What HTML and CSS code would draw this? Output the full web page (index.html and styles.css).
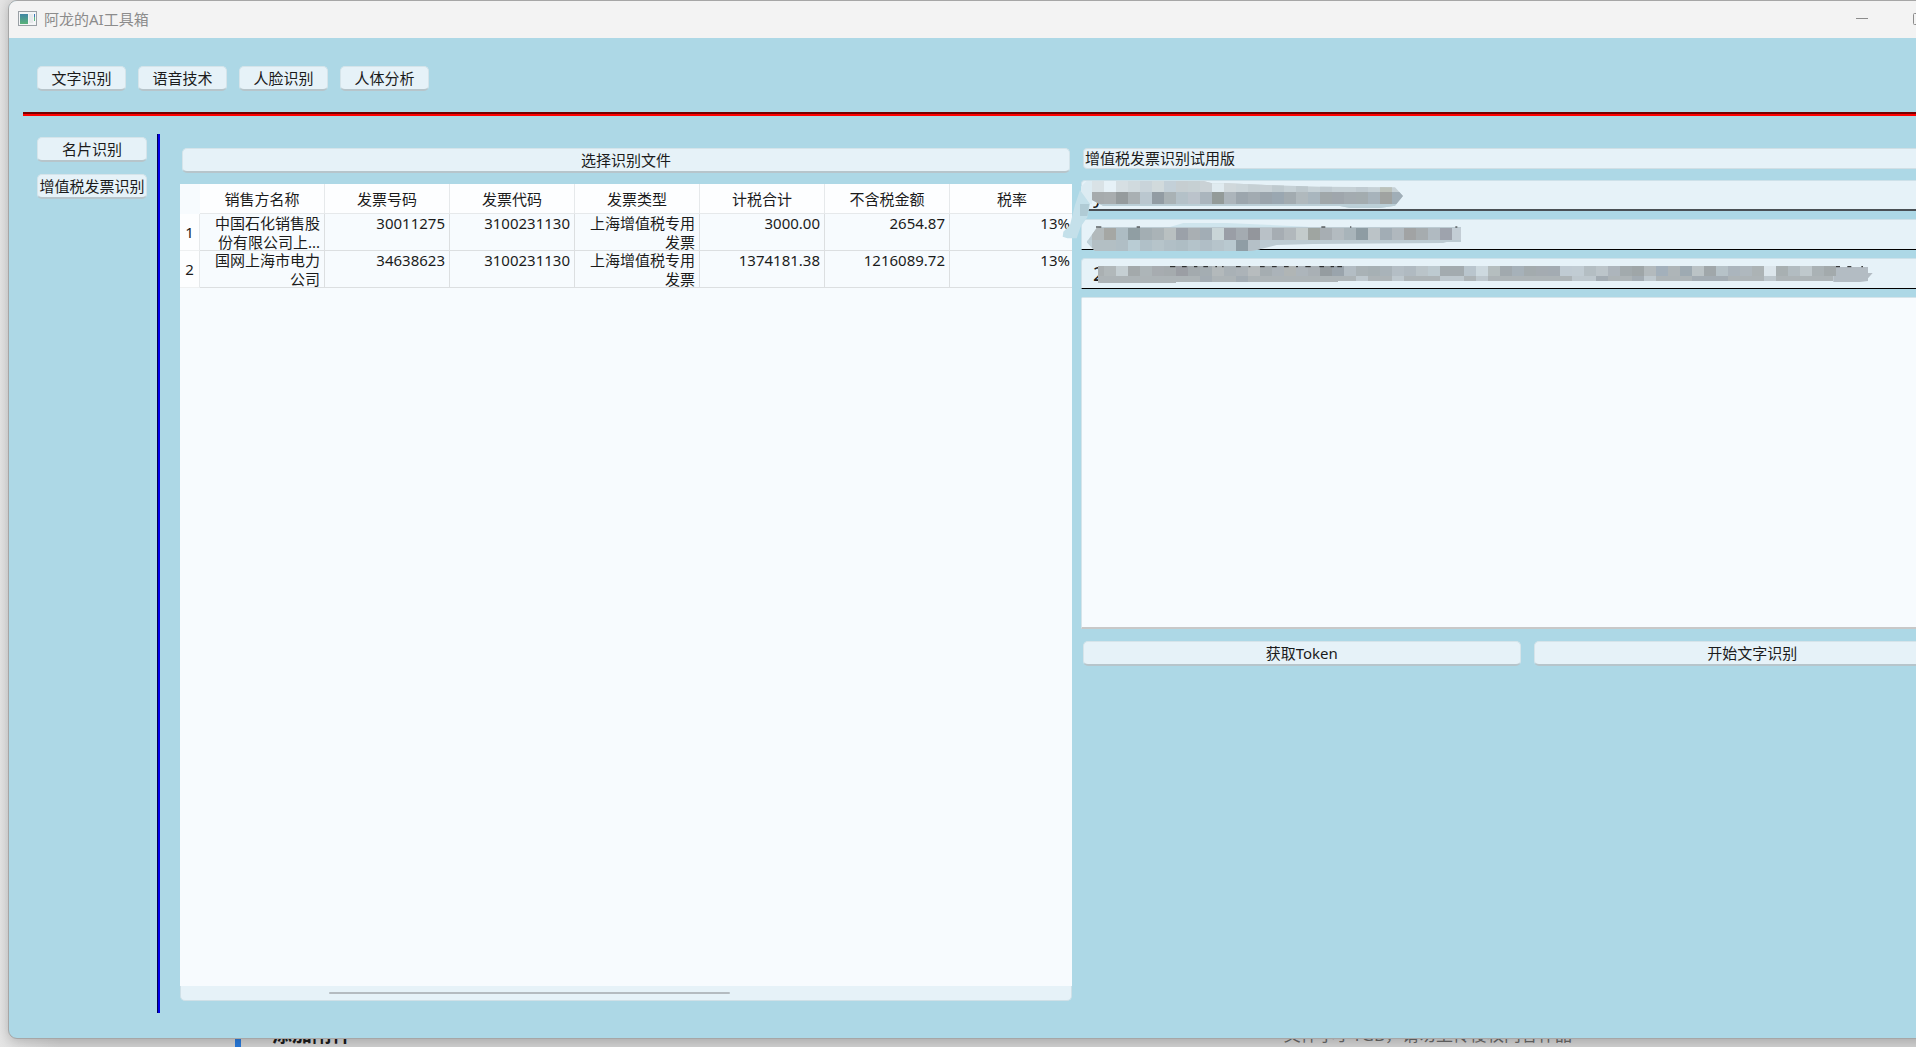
FILE: index.html
```html
<!DOCTYPE html>
<html lang="zh-CN">
<head>
<meta charset="utf-8">
<title>阿龙的AI工具箱</title>
<link rel="stylesheet" href="styles.css">
</head>
<body>
<div class="backdrop" aria-hidden="true">
  <span class="backdrop-mark"></span>
  <span class="backdrop-title">添加附件</span>
  <span class="backdrop-note">文件小于1GB，请勿上传侵权内容作品</span>
</div>

<div class="window">
  <header class="titlebar">
    <svg class="app-icon" width="19" height="15" viewBox="0 0 19 15">
      <defs><linearGradient id="scr" x1="0" y1="0" x2="0" y2="1"><stop offset="0" stop-color="#3f86a5"/><stop offset="1" stop-color="#58b278"/></linearGradient></defs>
      <rect x=".5" y=".5" width="18" height="14" fill="#f4f6f7" stroke="#9aa0a5"/>
      <rect x="2" y="3" width="8" height="10" fill="url(#scr)"/>
      <path d="M11 3h4v9h-4z" fill="#e6e9eb"/>
      <path d="M16.500 3v3" stroke="#3b78b8"/><path d="M16.500 6v4" stroke="#5bb782"/>
    </svg>
    <h1 class="app-title">阿龙的AI工具箱</h1>
    <div class="caption-buttons">
      <button class="caption" aria-label="最小化"><svg width="12" height="12" viewBox="0 0 12 12"><path d="M0 5.500h12"/></svg></button>
      <button class="caption" aria-label="最大化"><svg width="12" height="12" viewBox="0 0 12 12"><rect x=".5" y=".5" width="11" height="11" rx="1"/></svg></button>
      <button class="caption" aria-label="关闭"><svg width="12" height="12" viewBox="0 0 12 12"><path d="M1 1l10 10M11 1L1 11"/></svg></button>
    </div>
  </header>

  <nav class="toolbar">
    <button class="btn">文字识别</button>
    <button class="btn">语音技术</button>
    <button class="btn">人脸识别</button>
    <button class="btn">人体分析</button>
  </nav>
  <hr class="divider">

  <div class="content">
    <nav class="sidebar">
      <button class="btn">名片识别</button>
      <button class="btn">增值税发票识别</button>
    </nav>

    <main class="panels">
      <section class="results">
        <button class="btn">选择识别文件</button>
        <div class="grid-view">
          <div class="viewport">
            <table class="invoices">
              <thead>
                <tr><td class="corner"></td><th>销售方名称</th><th>发票号码</th><th>发票代码</th><th>发票类型</th><th>计税合计</th><th>不含税金额</th><th>税率</th></tr>
              </thead>
              <tbody>
                <tr><th>1</th><td><div>中国石化销售股份有限公司上...</div></td><td><div>30011275</div></td><td><div>3100231130</div></td><td><div>上海增值税专用发票</div></td><td><div>3000.00</div></td><td><div>2654.87</div></td><td><div>13%</div></td></tr>
                <tr><th>2</th><td><div>国网上海市电力公司</div></td><td><div>34638623</div></td><td><div>3100231130</div></td><td><div>上海增值税专用发票</div></td><td><div>1374181.38</div></td><td><div>1216089.72</div></td><td><div>13%</div></td></tr>
              </tbody>
            </table>
          </div>
          <div class="scrollbar"><span class="thumb"></span></div>
        </div>
      </section>

      <section class="form">
        <h2 class="form-title">增值税发票识别试用版</h2>
        <div class="fields">
          <input class="field field-active" type="text" aria-label="API Key" value="y">
          <input class="field" type="text" aria-label="Secret Key">
          <input class="field" type="text" aria-label="Token" value="2">
          <svg class="mosaic" width="800" height="110" viewBox="63 150 2400 330" aria-hidden="true">
            <defs>
              <clipPath id="c1"><path d="M80 153H430L456 160H500L640 166L780 170L1005 172L1029 198L1005 227L960 234H870L840 228H130L96 210V153z"/></clipPath>
              <clipPath id="c2"><path d="M80 336L110 294L130 290H1203V336H1160L1150 339L760 342L650 345L590 360L570 363H105z"/></clipPath>
            </defs>
            <path fill="#dcebf2" d="M63 170L80 153H96V222H63z"/>
            <path fill="#c4e0ea" d="M60 180L90 222L82 262L62 290L50 325H22L8 320L10 305L30 285L45 225z"/>
            <path fill="#b0cbd5" d="M60 222H88L82 258H60z"/>
            <path fill="#cfe5ed" d="M320 294L370 279H500L740 290L770 294z"/>
            <g clip-path="url(#c1)">
              <path fill="#c6d1d6" d="M96 153H1030V240H96z"/>
              <path fill="#bbcfd7" d="M96 222H1030V240H96z"/>
              <g class="m1a"><rect x="96" fill="#d9e2e6"/><rect x="132" fill="#e6f1f7"/><rect x="168" fill="#d6dfe3"/><rect x="204" fill="#d0dade"/><rect x="240" fill="#c9d4da"/><rect x="276" fill="#d1dadc"/><rect x="312" fill="#c3d0d8"/><rect x="348" fill="#c6ced1"/><rect x="384" fill="#c6d0d3"/><rect x="420" fill="#cad2d6"/><rect x="456" fill="#e0ebf0"/><rect x="492" fill="#d0d8db"/><rect x="528" fill="#ccd6da"/><rect x="564" fill="#c6d0d4"/><rect x="600" fill="#c8d1d6"/><rect x="636" fill="#bfcacf"/><rect x="708" fill="#bdc8cd"/><rect x="780" fill="#c0cbd1"/><rect x="888" fill="#c0cbd1"/><rect x="960" fill="#bcc2bb"/></g>
              <g class="m1b"><rect x="96" fill="#a6abad"/><rect x="132" fill="#a8adaf"/><rect x="168" fill="#959b9d"/><rect x="204" fill="#a9b0b3"/><rect x="240" fill="#bac7cf"/><rect x="276" fill="#929ca3"/><rect x="312" fill="#a9b2b5"/><rect x="348" fill="#b4c1c8"/><rect x="384" fill="#bbc3cb"/><rect x="420" fill="#aab5bd"/><rect x="456" fill="#939b99"/><rect x="492" fill="#acb5bb"/><rect x="528" fill="#9ca6ad"/><rect x="564" fill="#a2abb1"/><rect x="600" fill="#9aa4ac"/><rect x="636" fill="#9aa7b1"/><rect x="672" fill="#a2abb0"/><rect x="708" fill="#b0b9bd"/><rect x="744" fill="#a9b6be"/><rect x="780" fill="#a0a7a9"/><rect x="816" fill="#9fa6ac"/><rect x="852" fill="#a3abb0"/><rect x="888" fill="#a3acaf"/><rect x="924" fill="#a7b3bb"/><rect x="960" fill="#a0a3a1"/><rect x="996" fill="#a0aeb7"/></g>
            </g>
            <g clip-path="url(#c2)">
              <path fill="#bccbd2" d="M80 290H1203V363H80z"/>
              <g class="m2b"><rect x="60" fill="#c0d2da"/><rect x="96" fill="#b3bfc4"/><rect x="132" fill="#b3bfc4"/><rect x="168" fill="#b0bec5"/><rect x="204" fill="#b9ccd4"/><rect x="240" fill="#b0c0c8"/><rect x="276" fill="#b6c4ca"/><rect x="312" fill="#b1bfc6"/><rect x="348" fill="#aebdc4"/><rect x="384" fill="#b4c3ca"/><rect x="420" fill="#b0bec6"/><rect x="456" fill="#b6c4cb"/><rect x="492" fill="#b9c9d0"/><rect x="528" fill="#8f9da5"/><rect x="564" fill="#b5c0c7"/></g>
              <g class="m2a"><rect x="96" fill="#b2b9bb"/><rect x="132" fill="#a5a7a4"/><rect x="168" fill="#adbcc3"/><rect x="204" fill="#909ea3"/><rect x="240" fill="#a3aeb3"/><rect x="276" fill="#aab3b7"/><rect x="312" fill="#b9c0c1"/><rect x="348" fill="#9ba1a9"/><rect x="384" fill="#a9afb3"/><rect x="420" fill="#a2adb5"/><rect x="456" fill="#c9d5d7"/><rect x="492" fill="#9a9ea6"/><rect x="528" fill="#a4abb1"/><rect x="564" fill="#93969c"/><rect x="600" fill="#b9c1c7"/><rect x="636" fill="#a6adb3"/><rect x="672" fill="#b1b8bc"/><rect x="708" fill="#c3cbcb"/><rect x="744" fill="#9fa5a1"/><rect x="780" fill="#a7aeb3"/><rect x="816" fill="#b3bbc0"/><rect x="852" fill="#a8b4ba"/><rect x="888" fill="#8e9ca3"/><rect x="924" fill="#bbc3c7"/><rect x="960" fill="#a2adb5"/><rect x="996" fill="#b0b8be"/><rect x="1032" fill="#a1a3a4"/><rect x="1068" fill="#a6acaf"/><rect x="1104" fill="#b0bac1"/><rect x="1140" fill="#9ea3ad"/><rect x="1176" fill="#c3cdd5"/></g>
            </g>
            <path fill="#adb4b7" d="M114 438H348V459H114zM348 438H834V456H348zM834 438H2320V453H834z"/>
            <path fill="#bec8ce" d="M888 438h36v15h-36zM996 438h36v15h-36zM1140 438h72v15h-72zM1248 438h36v15h-36zM1536 438h72v15h-72zM1752 438h36v15h-36zM2112 438h36v15h-36z"/>
            <path fill="#a3acb3" d="M420 438h36v18h-36zM528 438h36v18h-36zM1608 438h36v15h-36zM1716 438h36v15h-36zM1896 438h108v15h-108z"/>
            <path fill="#b3bcc3" d="M2320 411H2424V429H2438L2424 445V453L2400 456H2320z"/>
            <g class="m3"><rect x="114" fill="#aab0b2"/><rect x="132" fill="#b1b8ba"/><rect x="168" fill="#c5cfd3"/><rect x="204" fill="#a3a9ab"/><rect x="240" fill="#adb5b8"/><rect x="276" fill="#a7acb0"/><rect x="312" fill="#a5abae"/><rect x="348" fill="#9b9ea4"/><rect x="384" fill="#a3aaae"/><rect x="420" fill="#a4adb2"/><rect x="456" fill="#b3b9bb"/><rect x="492" fill="#a9b1b6"/><rect x="528" fill="#acb3b8"/><rect x="564" fill="#b7bcbe"/><rect x="600" fill="#a5adb1"/><rect x="636" fill="#abb3b9"/><rect x="672" fill="#b0b5b5"/><rect x="708" fill="#adb5bb"/><rect x="744" fill="#a9b0b5"/><rect x="780" fill="#959ca0"/><rect x="816" fill="#9aa4ac"/><rect x="852" fill="#b3bdc4"/><rect x="888" fill="#a9b2b6"/><rect x="924" fill="#a6b0b4"/><rect x="960" fill="#a9b3b9"/><rect x="996" fill="#b4bec5"/><rect x="1032" fill="#b0bac1"/><rect x="1068" fill="#bac4c9"/><rect x="1104" fill="#bdcad0"/><rect x="1140" fill="#a3abaf"/><rect x="1176" fill="#a3abaf"/><rect x="1212" fill="#b9c5cd"/><rect x="1248" fill="#cdd9df"/><rect x="1284" fill="#b5bebf"/><rect x="1320" fill="#a1a9ae"/><rect x="1356" fill="#a6b1b9"/><rect x="1392" fill="#a3abae"/><rect x="1428" fill="#a4abb1"/><rect x="1464" fill="#a3abb2"/><rect x="1500" fill="#c0cbd3"/><rect x="1536" fill="#c1ccd3"/><rect x="1572" fill="#b4bec3"/><rect x="1608" fill="#bcc5ca"/><rect x="1644" fill="#adb5bc"/><rect x="1680" fill="#a2aaad"/><rect x="1716" fill="#9fa6a8"/><rect x="1752" fill="#b3babd"/><rect x="1788" fill="#a3b0bb"/><rect x="1824" fill="#aeb5b8"/><rect x="1860" fill="#9eaab2"/><rect x="1896" fill="#bbc3c6"/><rect x="1932" fill="#a0a7aa"/><rect x="1968" fill="#b6c2c8"/><rect x="2004" fill="#abb5bd"/><rect x="2040" fill="#afb8be"/><rect x="2076" fill="#acb3b5"/><rect x="2112" fill="#dce6ec"/><rect x="2148" fill="#a8b0b2"/><rect x="2184" fill="#b2bcc1"/><rect x="2220" fill="#bfc8cc"/><rect x="2256" fill="#aab2b5"/><rect x="2292" fill="#a3aaac"/></g>
            <path class="ticks" d="M108 291h16M230 291h10M784 291h12M870 291h4M1186 291h6M330 410h16M366 410h14M402 410h10M430 410h14M466 410h5M486 410h5M528 410h14M566 410h5M600 410h14M636 410h14M672 410h14M708 410h6M736 410h16M778 410h14M812 410h10M832 410h14M2328 410h12M2362 410h12M2404 410h5"/>
          </svg>
        </div>
        <textarea class="output" aria-label="识别结果"></textarea>
        <div class="actions">
          <button class="btn">获取Token</button>
          <button class="btn">开始文字识别</button>
        </div>
      </section>
    </main>
  </div>
</div>
</body>
</html>
```
FILE: styles.css
```css
* { box-sizing: border-box; }

html, body { height: 100%; }

body {
  margin: 0;
  display: grid;
  grid-template: minmax(0, 1fr) / minmax(0, 1fr);
  overflow: hidden;
  background: #d6d6d6;
  color: #1b1b1b;
  font: 15px/20px "Noto Sans", "Noto Sans CJK SC", sans-serif;
}

button, input, textarea { font: inherit; color: inherit; }

/* Page partly visible behind the application window */
.backdrop {
  grid-area: 1 / 1;
  display: flex;
  align-items: flex-end;
  padding: 0 344px 0 235px;
  background: linear-gradient(90deg, #e4e4e4, #d0d0d0 60px);
}
.backdrop-mark { width: 6px; height: 24px; margin-right: 31px; background: #2878d8; }
.backdrop-title { font-size: 20px; line-height: 24px; font-weight: 700; }
.backdrop-note { margin-left: auto; font-size: 17px; line-height: 24px; color: #666; }

/* The window runs past the right edge of the screen */
.window {
  grid-area: 1 / 1;
  z-index: 1;
  display: flex;
  flex-direction: column;
  width: calc(100% + 81px);
  margin: 0 0 8px 8px;
  border: 1px solid #a6a6a6;
  border-radius: 9px;
  overflow: hidden;
  background: #add8e6;
  box-shadow: 0 2px 12px rgba(0, 0, 0, .2);
}

.titlebar {
  display: flex;
  align-items: center;
  flex: none;
  height: 37px;
  padding: 0 0 2px 9px;
  background: #f3f3f3;
}
.app-title { margin: 0 auto 0 7px; font-size: 15px; font-weight: 400; color: #8c8c8c; }
.caption-buttons { display: flex; align-self: stretch; }
.caption { display: grid; place-items: center; width: 57px; padding: 0; border: 0; background: none; }
.caption svg { fill: none; stroke: #8c8c8c; }

.btn {
  height: 25px;
  padding: 0;
  border: 1px solid #d5e4ea;
  border-bottom: 2px solid #b7c5cb;
  border-radius: 5px;
  background: #e6f2f8;
  line-height: 20px;
  white-space: nowrap;
}

.toolbar { display: flex; gap: 12px; padding: 28px 28px 21px; }
.toolbar .btn { width: 89px; }

.divider {
  flex: none;
  height: 4px;
  margin: 0 15px 0 14px;
  border: 0;
  border-top: 2px solid #780000;
  background: #f00;
}

.content { display: flex; flex: 1; min-height: 0; padding: 18px 31px 25px 28px; }

.sidebar {
  display: flex;
  flex-direction: column;
  gap: 12px;
  flex: none;
  width: 123px;
  padding: 3px 11px 0 0;
  border-right: 2px solid #0000e6;
  box-shadow: inset -1px 0 #000050;
}

.panels {
  flex: 1;
  display: grid;
  grid-template-columns: minmax(0, 1fr) minmax(0, 1fr);
  gap: 9px;
  padding: 14px 0 12px 20px;
}

.results { display: flex; flex-direction: column; gap: 11px; min-height: 0; }
.results > .btn { margin: 0 2px; }

.grid-view { flex: 1; display: flex; flex-direction: column; min-height: 0; }
.viewport { flex: 1; overflow: hidden; background: #f7fbfe; }

.invoices { table-layout: fixed; width: 895px; border-collapse: separate; border-spacing: 0; }
.invoices th { padding: 0; font-weight: 400; background: #fdfeff; border: solid #e6e9eb; border-width: 0 1px 1px 0; width: 125px; }
.invoices thead th { height: 30px; }
.invoices tbody th { border-bottom-color: #eef0f1; }
.invoices .corner { width: 20px; border: 0; padding: 0; }
.invoices td { padding: 0 4px; border: solid #dcdfe1; border-width: 0 1px 1px 0; vertical-align: top; text-align: right; }
.invoices td div { height: 36px; line-height: 19px; }

.scrollbar {
  height: 15px;
  padding: 6px 0 0 148px;
  background: #e6f2f8;
  border: 1px solid #cfe0e7;
  border-top: 0;
  border-radius: 0 0 5px 5px;
}
.thumb { display: block; width: 54%; height: 2px; border-radius: 1px; background: #b4bbc0; }

.form { display: flex; flex-direction: column; }
.form-title {
  height: 21px;
  margin: 0 2px 11px;
  padding-left: 1px;
  border: 1px solid #d0dfe5;
  border-radius: 4px;
  background: #e6f2f8;
  font-size: 15px;
  line-height: 19px;
  font-weight: 400;
}

.fields { position: relative; display: flex; flex-direction: column; gap: 8px; margin-bottom: 8px; }
.field {
  height: 31px;
  padding: 0 11px;
  border: 1px solid #cde1e9;
  border-bottom-color: #000;
  border-radius: 4px 4px 0 0;
  background: #e6f2f8;
  font-size: 20px;
}
.field-active { border-bottom: 2px solid #4a5055; }

/* Pixelated cover over the private keys */
.mosaic { position: absolute; left: 0; top: 0; overflow: visible; pointer-events: none; }
.mosaic rect { width: 36px; shape-rendering: crispEdges; }
.m1a rect { y: 150px; height: 36px; }
.m1b rect { y: 186px; height: 36px; }
.m2a rect { y: 294px; height: 36px; }
.m2b rect { y: 330px; height: 36px; }
.m3 rect { y: 408px; height: 30px; }
.ticks { stroke: #1b1b1b; stroke-width: 3; fill: none; }

.output {
  height: 332px;
  margin-bottom: 12px;
  border: 1px solid #d5e4ea;
  border-bottom: 2px solid #c8c8c8;
  border-radius: 2px 2px 0 0;
  background: #f7fbfe;
  resize: none;
}

.actions { display: flex; gap: 13px; padding: 0 2px; }
.actions .btn { flex: 1; }
```
